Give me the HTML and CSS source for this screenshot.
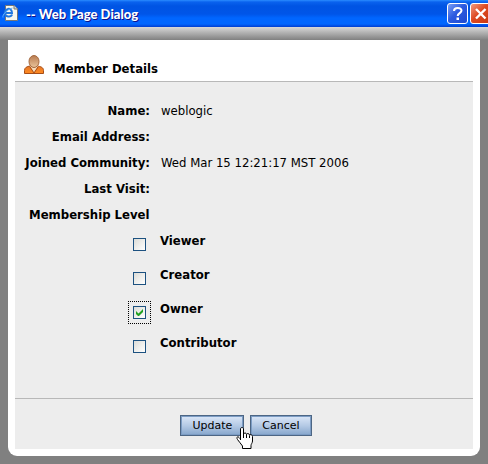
FILE: index.html
```html
<!DOCTYPE html>
<html lang="en">
<head>
    <meta charset="UTF-8">
    <meta name="viewport" content="width=device-width, initial-scale=1.0">
    <title>-- Web Page Dialog</title>
    <link rel="stylesheet" href="styles.css">
</head>
<body>
    <header class="titlebar">
        <svg class="pageIcon" width="16" height="17" viewBox="0 0 16 17">
            <path d="M3.500 .5H12L15.500 4V15.500H3.500Z" fill="#f8f8f0" stroke="#777"/>
            <path d="M12 .5V4H15.500" fill="#d8d8cc" stroke="#777"/>
            <path d="M3 8H10C10 4.500 7.500 3.500 6 4C2 5 2 11 6 11.500C8 11.800 9.500 11 10 9.500" fill="none" stroke="#2278e0" stroke-width="2"/>
            <path d="M1 12.500C0 10 5 4.500 10.500 3" fill="none" stroke="#65b5ff"/>
        </svg>
        <h1 class="caption">-- Web Page Dialog</h1>
        <button class="winBtn" type="button" aria-label="Help">
            <svg width="17" height="17" viewBox="0 0 17 17">
                <path d="M5 6C5 2 12.500 2 12.500 5.500C12.500 8 8.700 8.200 8.700 11" fill="none" stroke="white" stroke-width="2"/>
                <path d="M7.500 12.500H10V15H7.500Z" fill="white"/>
            </svg>
        </button>
        <button class="winBtn close" type="button" aria-label="Close">
            <svg width="17" height="17" viewBox="0 0 17 17">
                <path d="M4 4L13.500 13.500M13.500 4L4 13.500" stroke="white" stroke-width="2.400"/>
            </svg>
        </button>
    </header>
    <main class="page">
        <div class="dialog">
            <div class="heading">
                <svg width="22" height="20" viewBox="0 0 22 20">
                    <defs>
                        <linearGradient id="skin" x2="0" y2="1">
                            <stop offset="0" stop-color="#b87b50"/>
                            <stop offset="1" stop-color="#eac49a"/>
                        </linearGradient>
                        <linearGradient id="coat" x2="0" y2="1">
                            <stop offset="0" stop-color="#e5792c"/>
                            <stop offset="1" stop-color="#ff8a20"/>
                        </linearGradient>
                    </defs>
                    <path d="M1.500 18.500V15.500C1.500 12.500 4 11.500 7 11H14C18 11.500 20.500 12.500 20.500 15.500V18.500Z" fill="url(#coat)" stroke="#a74d17"/>
                    <path d="M7 11L11 18L15 11Z" fill="#f6d9b8"/>
                    <path d="M7 12L11 18L15 12" fill="none" stroke="#a74d17"/>
                    <ellipse cx="11" cy="6.500" rx="5" ry="6" fill="url(#skin)" stroke="#a4683e"/>
                </svg>
                <h2>Member Details</h2>
            </div>
            <form class="panel">
                <dl class="details">
                    <dt>Name:</dt><dd>weblogic</dd>
                    <dt>Email Address:</dt><dd></dd>
                    <dt>Joined Community:</dt><dd>Wed Mar 15 12:21:17 MST 2006</dd>
                    <dt>Last Visit:</dt><dd></dd>
                </dl>
                <fieldset class="levels">
                    <legend>Membership Level</legend>
                    <div class="level">
                        <input type="checkbox" id="viewer">
                        <label for="viewer">Viewer</label>
                    </div>
                    <div class="level">
                        <input type="checkbox" id="creator">
                        <label for="creator">Creator</label>
                    </div>
                    <div class="level">
                        <input type="checkbox" id="owner" class="current" checked>
                        <label for="owner">Owner</label>
                    </div>
                    <div class="level">
                        <input type="checkbox" id="contributor">
                        <label for="contributor">Contributor</label>
                    </div>
                </fieldset>
                <div class="buttons">
                    <span class="pointed">
                        <button class="btn" type="button">Update</button>
                        <svg class="hand" width="18" height="22" viewBox="0 0 18 22">
                            <path d="M4.500 13V2C4.500 0 7.500 0 7.500 2V7C8 5.500 10.500 5.700 10.500 7.500C11 6 13.500 6.300 13.500 8.200C14.500 7 16.500 8 16.500 9.500V14C16.500 16 15 17 15 18.500V21.500H6.500V19C5 17 3 14.500 1.500 12.500C0 10 2 9 3 10.500L4.500 12" fill="white" stroke="black"/>
                            <path d="M7.500 6.500V11M10.500 7.500V11M13.500 8.500V11" stroke="black"/>
                        </svg>
                    </span>
                    <button class="btn" type="button">Cancel</button>
                </div>
            </form>
        </div>
    </main>
</body>
</html>
```
FILE: styles.css
```css
*{
    box-sizing: border-box;
}
body{
    margin: 0;
    background-color: #808080;
    color: black;
    font-family: "DejaVu Sans Condensed", "DejaVu Sans", sans-serif;
    font-size: 13px;
    line-height: 16px;
}
h1, h2, dl, dd{
    margin: 0;
}
.titlebar{
    display: flex;
    align-items: center;
    height: 27px;
    padding-left: 2px;
    overflow: hidden;
    background: linear-gradient(#2a8cff 0, #0a62ee 2px, #0054e3 6px, #0055e8 14px, #0066ff 18px, #0066ff 24px, #003dd0 27px);
}
.pageIcon{
    flex: none;
}
.caption{
    flex: 1;
    margin-left: 8px;
    color: white;
    font-family: Lato, sans-serif;
    font-size: 13px;
    font-weight: 900;
    white-space: nowrap;
    text-shadow: 1px 1px #0f1089;
}
.winBtn{
    flex: none;
    width: 21px;
    height: 21px;
    margin-left: 2px;
    padding: 1px;
    border: 1px solid white;
    border-radius: 3px;
    background: linear-gradient(135deg, #7ca0f5, #2c5be0 45%, #1f49d0);
}
.winBtn svg{
    display: block;
}
.close{
    margin-right: -3px;
    background: linear-gradient(135deg, #f09a80, #dd4a22 45%, #c83812);
}
.page{
    padding: 13px 8px 8px;
    background: linear-gradient(#d8d8d8, #808080 13px);
}
.dialog{
    padding: 0 7px 7px;
    border-radius: 0 0 9px 9px;
    background-color: white;
}
.heading{
    display: flex;
    align-items: center;
    gap: 9px;
    height: 41px;
    padding: 8px 8px 0;
}
.heading h2{
    padding-top: 8px;
    font-size: 13px;
}
.panel{
    border-top: 1px solid #b8b8b8;
    background-color: #ededed;
}
.details{
    display: grid;
    grid-template-columns: 135px 1fr;
    gap: 10px 11px;
    padding-top: 21px;
}
.details dt{
    display: flex;
    justify-content: flex-end;
    font-weight: bold;
    white-space: nowrap;
}
.levels{
    margin: 0;
    padding: 10px 0 29px;
    border: 0;
    font-weight: bold;
}
.levels legend{
    padding: 10px 0 0 14px;
}
.level{
    display: flex;
    gap: 14px;
    height: 34px;
    padding-left: 118px;
}
.level input{
    appearance: none;
    width: 13px;
    height: 13px;
    margin: 5px 0 0;
    border: 1px solid #1c5180;
    background: linear-gradient(135deg, #dcdcd7, white);
}
.level input:checked{
    background: url("data:image/svg+xml,%3Csvg xmlns='http://www.w3.org/2000/svg' width='11' height='11'%3E%3Cpath d='M2 4V7L4 9H5L9 5V2L4.500 6.500Z' fill='%2321a121'/%3E%3C/svg%3E"), linear-gradient(135deg, #dcdcd7, white);
}
.level .current{
    outline: 1px dotted black;
    outline-offset: 4px;
}
.buttons{
    display: flex;
    justify-content: center;
    gap: 6px;
    padding: 16px 0 13px 4px;
    border-top: 1px solid #b8b8b8;
}
.pointed{
    position: relative;
    display: flex;
}
.btn{
    height: 21px;
    padding: 0 11px;
    border: 1px solid #4d6684;
    background: linear-gradient(#dbe7f8, #b5cae5 50%, #86a6cc);
    box-shadow: inset 1px 1px #7c9cc4, inset -1px -1px #7c9cc4;
    color: black;
    font-family: "DejaVu Sans", sans-serif;
    font-size: 11px;
}
.hand{
    position: absolute;
    left: 56px;
    top: 12px;
}
```
